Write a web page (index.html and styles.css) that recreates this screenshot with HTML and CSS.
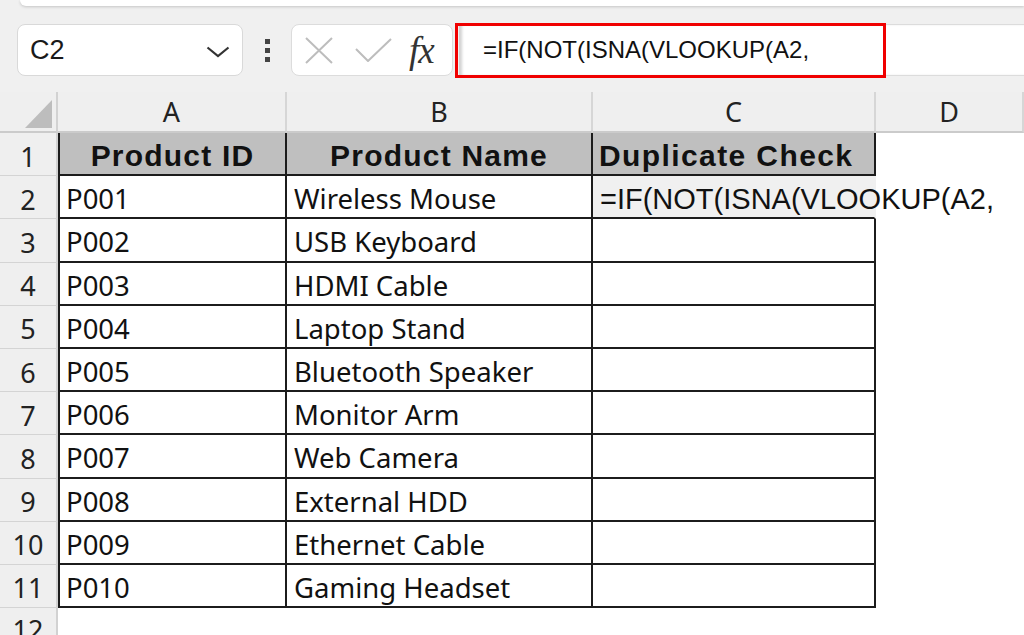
FILE: index.html
```html
<!DOCTYPE html>
<html>
<head>
<meta charset="utf-8">
<link rel="stylesheet" href="styles.css">
</head>
<body>
<div class="app">
  <div class="top-strip"></div>
  <div class="fbar">
    <div class="namebox">
      <span class="ref">C2</span>
      <svg class="chev" width="24" height="12" viewBox="0 0 24 12"><path d="M1.5 1.5 L12 10 L22.5 1.5" fill="none" stroke="#333" stroke-width="2.2"/></svg>
    </div>
    <div class="dots"><i></i><i></i><i></i></div>
    <div class="fxbox">
      <svg class="ico-x" width="28" height="27" viewBox="0 0 28 27"><path d="M1 1 L27 26 M27 1 L1 26" fill="none" stroke="#bdbdbd" stroke-width="2"/></svg>
      <svg class="ico-ok" width="37" height="24" viewBox="0 0 37 24"><path d="M1 11 L13 23 L36 1" fill="none" stroke="#bdbdbd" stroke-width="2"/></svg>
      <span class="fx">fx</span>
    </div>
    <div class="finput">
      <span class="ftext">=IF(NOT(ISNA(VLOOKUP(A2,</span>
      <div class="hl"></div>
    </div>
  </div>

  <div class="sheet">
    <div class="corner"><span class="tri"></span></div>
    <div class="ch">A</div>
    <div class="ch">B</div>
    <div class="ch">C</div>
    <div class="ch">D</div>
    <div class="ch last"></div>

    <div class="rh">1</div>
    <div class="c hd first">Product ID</div>
    <div class="c hd">Product Name</div>
    <div class="c hd left">Duplicate Check</div>
    <div class="e"></div><div class="e"></div>

    <div class="rh">2</div>
    <div class="c first">P001</div>
    <div class="c">Wireless Mouse</div>
    <div class="c active"><span class="formula">=IF(NOT(ISNA(VLOOKUP(A2,</span></div>
    <div class="e"></div><div class="e"></div>

    <div class="rh">3</div>
    <div class="c first">P002</div>
    <div class="c">USB Keyboard</div>
    <div class="c"></div>
    <div class="e"></div><div class="e"></div>

    <div class="rh">4</div>
    <div class="c first">P003</div>
    <div class="c">HDMI Cable</div>
    <div class="c"></div>
    <div class="e"></div><div class="e"></div>

    <div class="rh">5</div>
    <div class="c first">P004</div>
    <div class="c">Laptop Stand</div>
    <div class="c"></div>
    <div class="e"></div><div class="e"></div>

    <div class="rh">6</div>
    <div class="c first">P005</div>
    <div class="c">Bluetooth Speaker</div>
    <div class="c"></div>
    <div class="e"></div><div class="e"></div>

    <div class="rh">7</div>
    <div class="c first">P006</div>
    <div class="c">Monitor Arm</div>
    <div class="c"></div>
    <div class="e"></div><div class="e"></div>

    <div class="rh">8</div>
    <div class="c first">P007</div>
    <div class="c">Web Camera</div>
    <div class="c"></div>
    <div class="e"></div><div class="e"></div>

    <div class="rh">9</div>
    <div class="c first">P008</div>
    <div class="c">External HDD</div>
    <div class="c"></div>
    <div class="e"></div><div class="e"></div>

    <div class="rh">10</div>
    <div class="c first">P009</div>
    <div class="c">Ethernet Cable</div>
    <div class="c"></div>
    <div class="e"></div><div class="e"></div>

    <div class="rh">11</div>
    <div class="c first">P010</div>
    <div class="c">Gaming Headset</div>
    <div class="c"></div>
    <div class="e"></div><div class="e"></div>

    <div class="rh">12</div>
    <div class="e"></div><div class="e"></div><div class="e"></div><div class="e"></div><div class="e"></div>
  </div>
</div>
</body>
</html>
```

FILE: styles.css
```css
* { box-sizing: border-box; }
html, body { margin: 0; padding: 0; }
body {
  width: 1024px;
  height: 635px;
  overflow: hidden;
  background: #f0f0f0;
  font-family: "Liberation Sans", Arial, sans-serif;
  color: #111;
}
.app { display: flex; flex-direction: column; }

.top-strip {
  height: 6px;
  margin-left: 20px;
  background: #fff;
  border-radius: 0 0 0 8px;
  box-shadow: 0 1px 3px rgba(0,0,0,0.18);
}

.fbar {
  display: flex;
  align-items: stretch;
  height: 52px;
  margin-top: 18px;
  padding-left: 17px;
}
.namebox {
  width: 226px;
  background: #fff;
  border: 1px solid #d9d9d9;
  border-radius: 8px;
  display: flex;
  align-items: center;
  justify-content: space-between;
  padding: 0 12px 0 12px;
}
.ref { font-size: 27px; color: #1a1a1a; }
.chev { margin-top: 4px; }

.dots {
  width: 48px;
  display: flex;
  flex-direction: column;
  align-items: center;
  justify-content: center;
  gap: 4px;
}
.dots i { display: block; width: 5px; height: 5px; background: #444; }

.fxbox {
  width: 162px;
  background: #fff;
  border: 1px solid #dcdcdc;
  border-radius: 8px;
  display: flex;
  align-items: center;
  padding-left: 13px;
}
.ico-x { margin-right: 22px; }
.ico-ok { margin-right: 17px; margin-top: -1px; }
.fx {
  font-family: "Liberation Serif", "Times New Roman", serif;
  font-style: italic;
  font-size: 37px;
  line-height: 1;
  color: #333;
  margin-top: 1px;
  letter-spacing: -1px;
}

.finput {
  position: relative;
  flex: 1;
  margin-left: 6px;
  background: #fff;
  border-top: 1px solid #dcdcdc;
  border-bottom: 1px solid #dcdcdc;
  box-shadow: inset 4px 0 3px -1px rgba(0,0,0,0.18);
  display: flex;
  align-items: center;
  padding-left: 24px;
}
.ftext { font-size: 24px; color: #111; }
.hl {
  position: absolute;
  left: -4px;
  top: -2px;
  width: 431px;
  height: 55px;
  border: 3px solid #f00000;
}

.sheet {
  margin-top: 16px;
  display: grid;
  grid-template-columns: 58px 229px 306px 283px 148px 1fr;
  grid-template-rows: 41px repeat(11, 43.2px) 40px;
}
.corner {
  background: #efefef;
  border-right: 2px solid #d2d2d2;
  border-bottom: 2px solid #cbcbcb;
  position: relative;
}
.tri {
  position: absolute;
  left: 25px;
  top: 8px;
  width: 27px;
  height: 28px;
  background: #bdbdbd;
  clip-path: polygon(100% 0, 100% 100%, 0 100%);
}
.ch {
  background: #efefef;
  border-right: 2px solid #d6d6d6;
  border-bottom: 2px solid #cbcbcb;
  display: flex;
  align-items: flex-end;
  justify-content: center;
  padding-bottom: 6px;
  font-family: "Noto Sans", "Open Sans", sans-serif;
  font-size: 27px;
  line-height: 1;
  color: #222;
}
.ch.last { border-right: none; }
.rh {
  background: #efefef;
  border-right: 2px solid #d2d2d2;
  border-bottom: 1px solid #d4d4d4;
  display: flex;
  align-items: center;
  justify-content: center;
  font-family: "Noto Sans", "Open Sans", sans-serif;
  font-size: 27px;
  color: #222;
  padding-top: 4px;
}
.c {
  background: #fff;
  border-right: 2px solid #1c1c1c;
  border-bottom: 2px solid #1c1c1c;
  display: flex;
  align-items: center;
  padding-left: 7px;
  padding-top: 4px;
  font-family: "Noto Sans", "Open Sans", sans-serif;
  font-size: 27.5px;
  color: #111;
  white-space: nowrap;
}
.c.first { border-left: 2px solid #1c1c1c; padding-left: 6px; }
.c.hd {
  background: #bfbfbf;
  font-family: "Liberation Sans", Arial, sans-serif;
  font-weight: bold;
  font-size: 30px;
  letter-spacing: 1.2px;
  justify-content: center;
  padding-left: 0;
  padding-top: 5px;
}
.c.hd.left { justify-content: flex-start; padding-left: 6px; letter-spacing: 1.4px; }
.c.active { border-right-color: transparent; overflow: visible; position: relative; z-index: 1; background: transparent; padding-top: 6px; }
.formula { font-family: "Liberation Sans", Arial, sans-serif; font-size: 29px; color: #111; }
.e { background: #fff; }
```
